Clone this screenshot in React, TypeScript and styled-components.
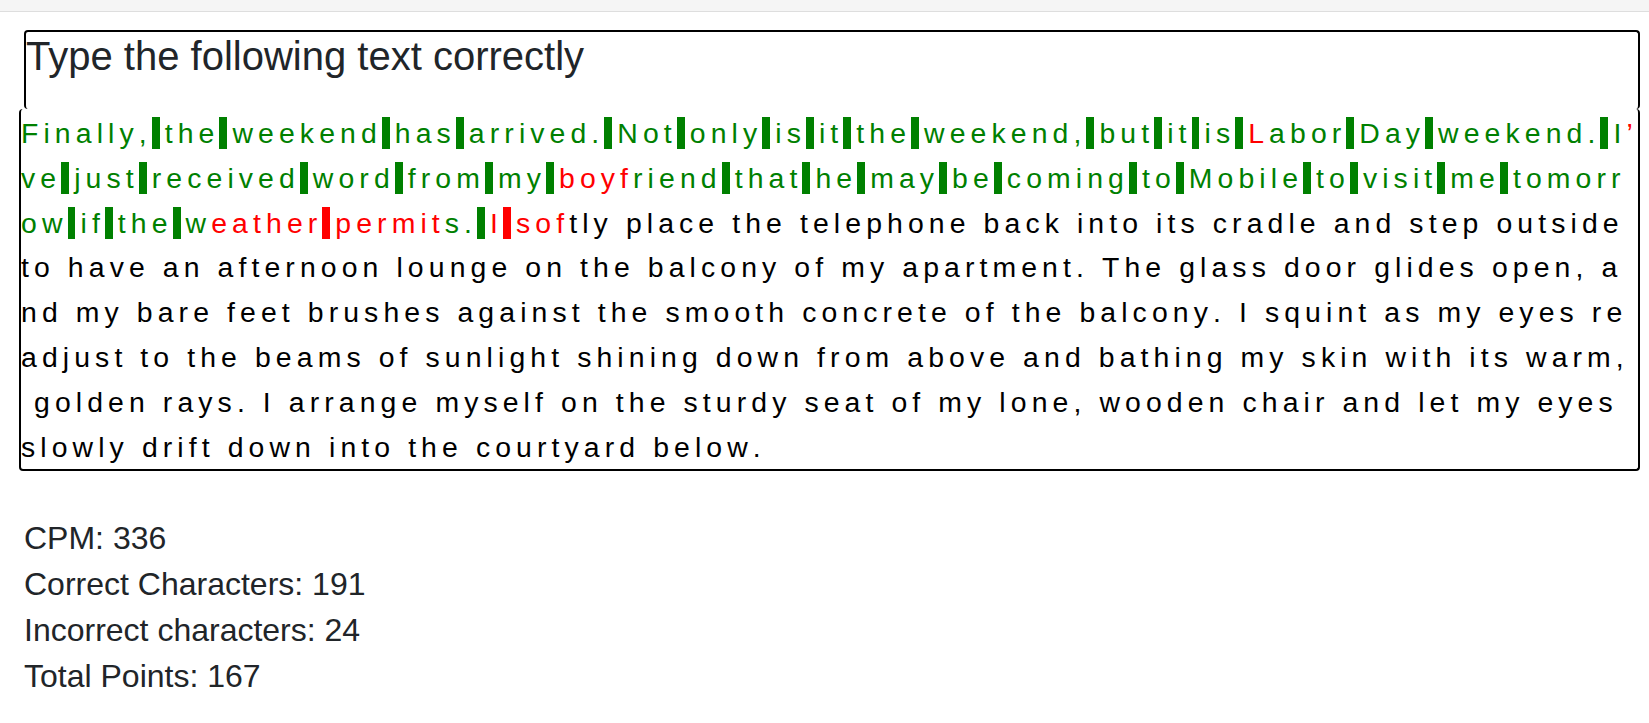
import React from "react";
import styled, { createGlobalStyle } from "styled-components";

type CharState = "correct" | "incorrect" | "pending";

const GlobalStyle = createGlobalStyle`
  html, body {
    margin: 0;
    padding: 0;
    background: #fff;
  }
  body {
    font-family: "Liberation Sans", Arial, sans-serif;
    color: #212529;
  }
`;

const TopBar = styled.div`
  height: 11px;
  background: #f5f5f5;
  border-bottom: 1px solid #dedede;
`;

const Page = styled.main`
  padding: 18px 9px 0 19px;
`;

const TitleBox = styled.div`
  margin-left: 5px;
  border: 2px solid #000;
  border-bottom: none;
  border-radius: 4px;
  padding-bottom: 29px;
`;

const Title = styled.h1`
  margin: 0;
  font-size: 40px;
  font-weight: 400;
  line-height: 48px;
  color: #212529;
`;

const TextBox = styled.div`
  border: 2px solid #000;
  border-top: none;
  border-radius: 4px;
  padding-top: 2px;
  font-size: 28.4px;
  color: #000;
`;

const Line = styled.div`
  height: 44.8px;
  line-height: 44.8px;
  white-space: pre;
`;

const colors: Record<CharState, string> = {
  correct: "#008000",
  incorrect: "#ff0000",
  pending: "#000",
};

const Char = styled.span<{ $state: CharState; $space: boolean }>`
  margin-right: 5.1px;
  color: ${(p) => colors[p.$state]};
  background: ${(p) =>
    p.$space && p.$state !== "pending" ? colors[p.$state] : "transparent"};
`;

const Stats = styled.div`
  margin-top: 44px;
  padding-left: 5px;
  font-size: 32px;
  line-height: 46px;
  color: #212529;
`;

// the passage, split where the box wraps it
const lines = [
  "Finally, the weekend has arrived. Not only is it the weekend, but it is Labor Day weekend. I’",
  "ve just received word from my boyfriend that he may be coming to Mobile to visit me tomorr",
  "ow if the weather permits. I softly place the telephone back into its cradle and step outside ",
  "to have an afternoon lounge on the balcony of my apartment. The glass door glides open, a",
  "nd my bare feet brushes against the smooth concrete of the balcony. I squint as my eyes re",
  "adjust to the beams of sunlight shining down from above and bathing my skin with its warm,",
  " golden rays. I arrange myself on the sturdy seat of my lone, wooden chair and let my eyes ",
  "slowly drift down into the courtyard below.",
];

const passage = lines.join("");

const typed =
  "Finally, the weekend has arrived. Not only is it the weekend, but it is labor Day weekend. I've just received word from my vpugriend that he may be coming to Mobile to visit me tomorrow if the wrsyjrt-[rtnoys. O-dpg";

const stateAt = (i: number): CharState => {
  if (i >= typed.length) return "pending";
  return typed[i] === passage[i] ? "correct" : "incorrect";
};

const offsets = lines.reduce<number[]>(
  (acc, line, i) => [...acc, i === 0 ? 0 : acc[i - 1] + lines[i - 1].length],
  []
);

export default function App() {
  let correct = 0;
  let incorrect = 0;
  for (let i = 0; i < typed.length; i++) {
    if (typed[i] === passage[i]) correct++;
    else incorrect++;
  }
  const cpm = 336;

  return (
    <>
      <GlobalStyle />
      <TopBar />
      <Page>
        <TitleBox>
          <Title>Type the following text correctly</Title>
        </TitleBox>
        <TextBox>
          {lines.map((line, li) => (
            <Line key={li}>
              {line.split("").map((ch, ci) => {
                const idx = offsets[li] + ci;
                return (
                  <Char key={ci} $state={stateAt(idx)} $space={ch === " "}>
                    {ch}
                  </Char>
                );
              })}
            </Line>
          ))}
        </TextBox>
        <Stats>
          <div>CPM: {cpm}</div>
          <div>Correct Characters: {correct}</div>
          <div>Incorrect characters: {incorrect}</div>
          <div>Total Points: {correct - incorrect}</div>
        </Stats>
      </Page>
    </>
  );
}
